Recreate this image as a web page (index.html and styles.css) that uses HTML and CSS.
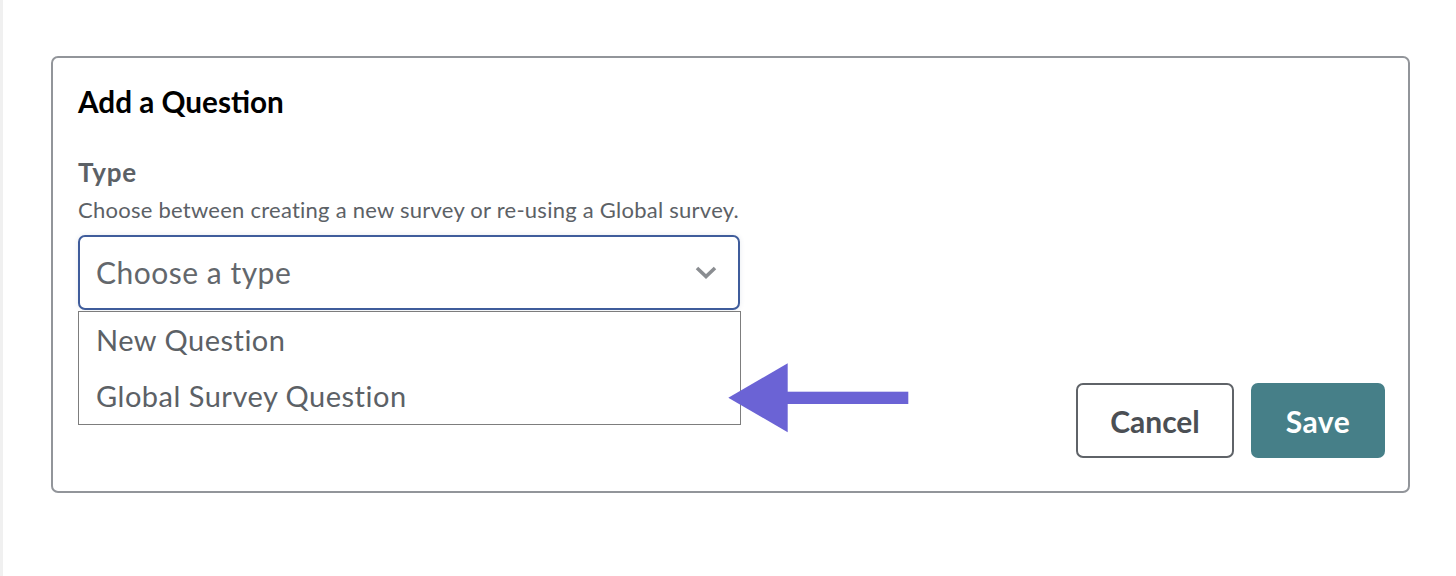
FILE: index.html
```html
<!DOCTYPE html>
<html lang="en">
<head>
<meta charset="utf-8">
<title>Add a Question</title>
<link rel="stylesheet" href="styles.css">
</head>
<body>
<div class="page">
  <div class="rail"></div>
  <main class="main">
    <section class="card">
      <h2 class="card-title">Add a Question</h2>
      <div class="field">
        <div class="field-label">Type</div>
        <div class="field-help">Choose between creating a new survey or re-using a Global survey.</div>
        <div class="select-wrap">
          <div class="select">
            <span class="select-value">Choose a type</span>
            <svg class="chevron" width="22" height="13" viewBox="0 0 22 13" aria-hidden="true">
              <polyline points="2,2 11,10.5 20,2" fill="none" stroke="#8a8d91" stroke-width="3.6" stroke-linecap="butt" stroke-linejoin="miter"/>
            </svg>
          </div>
          <ul class="options">
            <li class="option">New Question</li>
            <li class="option">Global Survey Question</li>
          </ul>
        </div>
      </div>
      <div class="actions">
        <button class="btn btn-cancel" type="button">Cancel</button>
        <button class="btn btn-save" type="button">Save</button>
      </div>
      <svg class="pointer-arrow" width="181" height="70" viewBox="0 0 181 70" aria-hidden="true">
        <polygon points="0.3,34.7 59.7,0.3 59.7,69.3" fill="#6b63d5"/>
        <rect x="59" y="28.7" width="121.3" height="12.3" fill="#6b63d5"/>
      </svg>
    </section>
  </main>
</div>
</body>
</html>
```
FILE: styles.css
```css
html, body {
  margin: 0;
  padding: 0;
  background: #ffffff;
}

body {
  font-family: "Lato", "Liberation Sans", sans-serif;
  color: #5c6166;
}

.page {
  display: flex;
  min-height: 576px;
}

.rail {
  width: 3px;
  flex: 0 0 3px;
  background: #f0f0f0;
}

.main {
  flex: 1;
  padding: 56px 46px 0 48px;
}

.card {
  position: relative;
  border: 2px solid #92959a;
  border-radius: 7px;
  padding: 26px 23px 33px 25px;
}

.card-title {
  margin: 0;
  font-size: 29.7px;
  line-height: 36px;
  font-weight: 700;
  color: #000000;
}

.field {
  margin-top: 37px;
}

.field-label {
  font-size: 26px;
  line-height: 30px;
  font-weight: 700;
  letter-spacing: 0.8px;
  color: #5c6166;
}

.field-help {
  margin-top: 10px;
  font-size: 22px;
  line-height: 26px;
  letter-spacing: 0.25px;
  color: #5c6166;
}

.select-wrap {
  position: relative;
  width: 662px;
  margin-top: 12px;
}

.select {
  box-sizing: border-box;
  height: 75px;
  display: flex;
  align-items: center;
  justify-content: space-between;
  padding: 0 21px 0 16px;
  border: 2px solid #3f5c9b;
  border-radius: 7px;
  box-shadow: 0 0 5px rgba(60, 80, 120, 0.12);
  background: #ffffff;
}

.select-value {
  font-size: 30px;
  line-height: 36px;
  letter-spacing: 0.5px;
  padding-bottom: 2px;
  color: #63676c;
}

.chevron {
  display: block;
}

.options {
  position: absolute;
  top: calc(100% + 1px);
  left: 0;
  width: 663px;
  box-sizing: border-box;
  margin: 0;
  padding: 0;
  list-style: none;
  border: 1px solid #7d7d7d;
  background: #ffffff;
}

.option {
  height: 56px;
  padding-left: 17px;
  font-size: 29px;
  line-height: 55px;
  letter-spacing: 0.5px;
  color: #5c6166;
}

.actions {
  display: flex;
  justify-content: flex-end;
  gap: 17px;
  margin-top: 73px;
}

.btn {
  box-sizing: border-box;
  height: 75px;
  border-radius: 7px;
  font-family: "Lato", "Liberation Sans", sans-serif;
  font-size: 30px;
  font-weight: 700;
  line-height: 36px;
  padding: 0;
  cursor: pointer;
}

.btn-cancel {
  width: 158px;
  background: #ffffff;
  border: 2px solid #5f6368;
  color: #4b4f54;
}

.btn-save {
  width: 134px;
  background: #467f88;
  border: 0;
  color: #ffffff;
  letter-spacing: 0.5px;
}

.pointer-arrow {
  position: absolute;
  left: 675px;
  top: 305px;
}
```
